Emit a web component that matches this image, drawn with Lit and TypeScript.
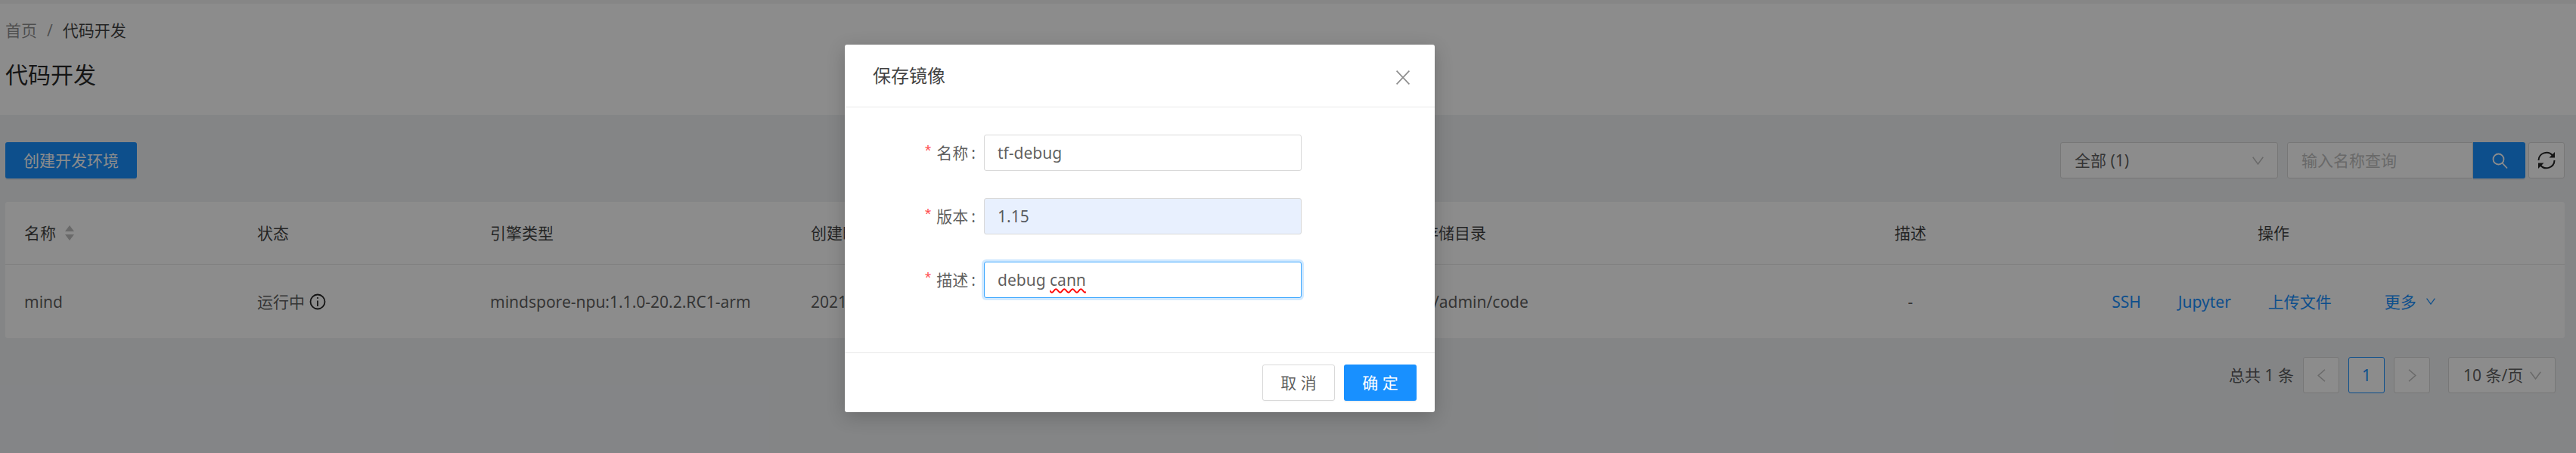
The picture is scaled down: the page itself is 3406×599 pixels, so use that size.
import { LitElement, css, html } from 'lit';
import { customElement } from 'lit/decorators.js';

const chevronDown = html`<svg class="chev" viewBox="0 0 15 11"><path d="M.7.7 7.5 10 14.3.7" fill="none" stroke="currentColor" stroke-width="1.5"/></svg>`;

@customElement('app-root')
export class AppRoot extends LitElement {
  static styles = css`
    :host {
      display: block;
      position: relative;
      width: 3406px;
      height: 599px;
      overflow: hidden;
      background: #f0f2f5;
      font-family: 'Noto Sans', 'Noto Sans CJK SC', sans-serif;
      font-size: 21px;
      line-height: 32px;
      color: rgba(0, 0, 0, 0.65);
    }

    .topband {
      height: 5px;
      background: #f4f4f4;
    }

    .head {
      height: 147px;
      box-sizing: border-box;
      padding: 19px 0 0 7px;
      background: #fff;
    }

    .crumbs {
      color: rgba(0, 0, 0, 0.45);
    }

    .crumbs .sep {
      margin: 0 13px;
    }

    .crumbs .now {
      color: rgba(0, 0, 0, 0.75);
    }

    h1 {
      margin: 20px 0 0;
      font-size: 30px;
      line-height: 45px;
      font-weight: 400;
      color: rgba(0, 0, 0, 0.85);
    }

    .content {
      padding: 36px 15px 0 7px;
    }

    .toolbar {
      display: flex;
      justify-content: space-between;
      align-items: center;
      height: 48px;
      margin-bottom: 31px;
    }

    .primary {
      display: flex;
      align-items: center;
      justify-content: center;
      box-sizing: border-box;
      height: 48px;
      border-radius: 3px;
      background: #1890ff;
      color: #fff;
      box-shadow: 0 2px 0 rgba(0, 0, 0, 0.05);
    }

    .create {
      width: 174px;
    }

    .tools {
      display: flex;
      align-items: center;
    }

    .box {
      display: flex;
      align-items: center;
      box-sizing: border-box;
      height: 48px;
      border: 1px solid #d9d9d9;
      border-radius: 3px;
      background: #fff;
    }

    .select {
      justify-content: space-between;
      width: 288px;
      padding: 0 18px;
      margin-right: 12px;
    }

    .chev {
      width: 15px;
      height: 11px;
      color: #bfbfbf;
    }

    .search {
      width: 246px;
      padding-left: 18px;
      color: #bfbfbf;
      border-radius: 3px 0 0 3px;
    }

    .go {
      width: 69px;
      border-radius: 0 3px 3px 0;
      margin-right: 4px;
    }

    .go svg {
      width: 24px;
      height: 24px;
    }

    .refresh {
      width: 48px;
      justify-content: center;
    }

    .refresh svg {
      width: 26px;
      height: 26px;
    }

    table {
      width: 3384px;
      table-layout: fixed;
      border-collapse: collapse;
      background: #fff;
      border-radius: 3px;
    }

    th {
      height: 82px;
      padding: 0 0 0 25px;
      border-bottom: 1px solid #e8e8e8;
      box-sizing: content-box;
      text-align: left;
      font-weight: 400;
      color: rgba(0, 0, 0, 0.75);
    }

    td {
      height: 97px;
      padding: 0 0 0 25px;
    }

    th.path {
      padding-left: 72px;
    }

    td.path {
      padding-left: 21px;
    }

    th.mid,
    td.mid {
      padding-left: 0;
      text-align: center;
    }

    .sortable {
      display: flex;
      align-items: center;
      gap: 12px;
    }

    .sort {
      width: 12px;
      height: 20px;
    }

    .status {
      display: flex;
      align-items: center;
      gap: 6px;
    }

    .status svg {
      width: 22px;
      height: 22px;
    }

    .ops {
      display: flex;
      justify-content: center;
      align-items: center;
      gap: 49px;
      color: #1890ff;
    }

    .more {
      display: flex;
      align-items: center;
      gap: 13px;
      margin-left: 21px;
    }

    .more .chev {
      width: 12px;
      height: 9px;
      color: #1890ff;
    }

    .pager {
      display: flex;
      justify-content: flex-end;
      align-items: center;
      gap: 12px;
      margin-top: 25px;
      padding-right: 12px;
    }

    .pager .box {
      width: 48px;
      justify-content: center;
      color: #bfbfbf;
    }

    .pager .on {
      border-color: #1890ff;
      color: #1890ff;
    }

    .pager .box svg {
      width: 11px;
      height: 17px;
    }

    .pager .size {
      width: 142px;
      margin-left: 12px;
      padding: 0 18px 0 19px;
      justify-content: space-between;
      color: rgba(0, 0, 0, 0.65);
    }

    .pager .size .chev {
      width: 15px;
      height: 11px;
      color: #bfbfbf;
    }

    .mask {
      position: absolute;
      inset: 0;
      padding: 59px 0 0 1117px;
      background: rgba(0, 0, 0, 0.45);
    }

    .modal {
      width: 780px;
      height: 486px;
      display: flex;
      flex-direction: column;
      background: #fff;
      border-radius: 3px;
      box-shadow: 0 6px 24px rgba(0, 0, 0, 0.2);
    }

    .modal-head {
      display: flex;
      justify-content: space-between;
      align-items: center;
      height: 82px;
      padding: 0 33px 0 37px;
      border-bottom: 1px solid #e8e8e8;
      font-size: 24px;
      color: rgba(0, 0, 0, 0.75);
    }

    .close {
      width: 18px;
      height: 19px;
      margin-top: 4px;
      color: #8c8c8c;
    }

    .modal-body {
      flex: 1;
      display: flex;
      flex-direction: column;
      gap: 36px;
      padding-top: 36px;
    }

    .field {
      display: flex;
      align-items: center;
    }

    .label {
      display: flex;
      justify-content: flex-end;
      align-items: center;
      width: 184px;
      box-sizing: border-box;
      padding-right: 11px;
    }

    .label .colon {
      margin-left: 4px;
    }

    .star {
      margin-right: 5px;
      color: #ff4d4f;
      font-family: 'Liberation Mono', monospace;
    }

    .input {
      width: 420px;
      padding-left: 17px;
    }

    .input.filled {
      background: #e8f0fe;
    }

    .input.focus {
      border-color: #40a9ff;
      box-shadow: 0 0 0 3px rgba(24, 144, 255, 0.2);
    }

    .typo {
      text-decoration: underline wavy #f00 1.5px;
      text-underline-offset: 3px;
    }

    .modal-foot {
      display: flex;
      justify-content: flex-end;
      gap: 12px;
      padding: 15px 24px;
      border-top: 1px solid #e8e8e8;
    }

    .cancel,
    .ok {
      width: 96px;
      justify-content: center;
    }

    .cancel {
      box-shadow: 0 2px 0 rgba(0, 0, 0, 0.015);
    }
  `;

  render() {
    return html`
      <div class="topband"></div>
      <div class="head">
        <div class="crumbs"><span>首页</span><span class="sep">/</span><span class="now">代码开发</span></div>
        <h1>代码开发</h1>
      </div>
      <div class="content">
        <div class="toolbar">
          <div class="primary create">创建开发环境</div>
          <div class="tools">
            <div class="box select"><span>全部 (1)</span>${chevronDown}</div>
            <div class="box search">输入名称查询</div>
            <div class="primary go">
              <svg viewBox="0 0 24 24" fill="none" stroke="#fff" stroke-width="1.8"><circle cx="10.5" cy="10.5" r="7"/><path d="m15.5 15.5 6.5 7"/></svg>
            </div>
            <div class="box refresh">
              <svg viewBox="0 0 26 26" fill="none" stroke="#262626" stroke-width="2">
                <path d="M2.5 13A10.5 10.5 0 0 1 21 6.5"/>
                <path d="M23.5 13A10.5 10.5 0 0 1 5 19.5"/>
                <path d="M24 2v7.5h-7.5z" fill="#262626" stroke="none"/>
                <path d="M2 24v-7.5h7.5z" fill="#262626" stroke="none"/>
              </svg>
            </div>
          </div>
        </div>
        <table>
          <colgroup>
            <col style="width:308px" />
            <col style="width:308px" />
            <col style="width:424px" />
            <col style="width:762px" />
            <col style="width:622px" />
            <col style="width:190px" />
            <col style="width:770px" />
          </colgroup>
          <thead>
            <tr>
              <th>
                <div class="sortable">
                  <span>名称</span>
                  <svg class="sort" viewBox="0 0 12 20" fill="#bfbfbf"><path d="M6 0l6 8H0zM6 20l-6-8h12z"/></svg>
                </div>
              </th>
              <th>状态</th>
              <th>引擎类型</th>
              <th>创建时间</th>
              <th class="path">存储目录</th>
              <th class="mid">描述</th>
              <th class="mid">操作</th>
            </tr>
          </thead>
          <tbody>
            <tr>
              <td>mind</td>
              <td>
                <div class="status">
                  <span>运行中</span>
                  <svg viewBox="0 0 22 22" fill="none" stroke="#262626" stroke-width="1.8">
                    <circle cx="11" cy="11" r="9.5"/>
                    <path d="M11 9.5V17"/>
                    <circle cx="11" cy="6" r="1.1" fill="#262626" stroke="none"/>
                  </svg>
                </div>
              </td>
              <td>mindspore-npu:1.1.0-20.2.RC1-arm</td>
              <td>2021-07-20 10:12:30</td>
              <td class="path">/home/admin/code</td>
              <td class="mid">-</td>
              <td class="mid">
                <div class="ops">
                  <span>SSH</span>
                  <span>Jupyter</span>
                  <span>上传文件</span>
                  <span class="more">更多 ${chevronDown}</span>
                </div>
              </td>
            </tr>
          </tbody>
        </table>
        <div class="pager">
          <span>总共 1 条</span>
          <div class="box"><svg viewBox="0 0 11 17" fill="none" stroke="currentColor" stroke-width="1.5"><path d="M10 .7 1.2 8.5l8.8 7.8"/></svg></div>
          <div class="box on">1</div>
          <div class="box"><svg viewBox="0 0 11 17" fill="none" stroke="currentColor" stroke-width="1.5"><path d="m1 .7 8.8 7.8L1 16.3"/></svg></div>
          <div class="box size"><span>10 条/页</span>${chevronDown}</div>
        </div>
      </div>
      <div class="mask">
        <div class="modal">
          <div class="modal-head">
            <span>保存镜像</span>
            <svg class="close" viewBox="0 0 18 19" fill="none" stroke="currentColor" stroke-width="1.6"><path d="m.6.6 16.8 17.8M17.4.6.6 18.4"/></svg>
          </div>
          <div class="modal-body">
            <div class="field">
              <div class="label"><span class="star">*</span>名称<span class="colon">:</span></div>
              <div class="box input">tf-debug</div>
            </div>
            <div class="field">
              <div class="label"><span class="star">*</span>版本<span class="colon">:</span></div>
              <div class="box input filled">1.15</div>
            </div>
            <div class="field">
              <div class="label"><span class="star">*</span>描述<span class="colon">:</span></div>
              <div class="box input focus">debug&nbsp;<span class="typo">cann</span></div>
            </div>
          </div>
          <div class="modal-foot">
            <div class="box cancel">取 消</div>
            <div class="primary ok">确 定</div>
          </div>
        </div>
      </div>
    `;
  }
}
